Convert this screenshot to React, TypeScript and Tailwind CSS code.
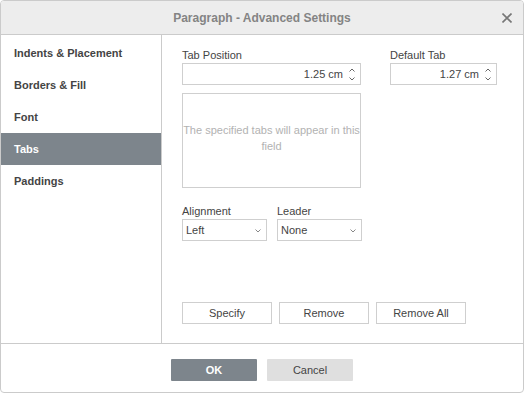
import React from "react";

const font = { fontFamily: '"Liberation Sans", Arial, sans-serif' };

function Spin() {
  return (
    <div className="absolute right-[5px] top-0 flex h-full flex-col items-center justify-center gap-[5px]">
      <svg width="6" height="4" viewBox="0 0 6 4">
        <path d="M0.5 3.5 L3 1 L5.5 3.5" fill="none" stroke="#666" strokeWidth="1" />
      </svg>
      <svg width="6" height="4" viewBox="0 0 6 4">
        <path d="M0.5 0.5 L3 3 L5.5 0.5" fill="none" stroke="#666" strokeWidth="1" />
      </svg>
    </div>
  );
}

function SpinInput({ value, w }: { value: string; w: string }) {
  return (
    <div className={`relative h-[22px] ${w} border border-[#cfcfcf] bg-white`}>
      <div className="flex h-full items-center justify-end pr-[17px] text-[11px] text-[#444]">{value}</div>
      <Spin />
    </div>
  );
}

function Select({ value }: { value: string }) {
  return (
    <div className="relative flex h-[22px] w-[85px] items-center border border-[#cfcfcf] bg-white pl-[3px] text-[11px] text-[#444]">
      {value}
      <svg className="absolute right-[5px] top-[9px]" width="6" height="4" viewBox="0 0 6 4">
        <path d="M0.5 0.5 L3 3 L5.5 0.5" fill="none" stroke="#888" strokeWidth="1" />
      </svg>
    </div>
  );
}

function Btn({ label, w }: { label: string; w: string }) {
  return (
    <div className={`flex h-[22px] ${w} items-center justify-center border border-[#cfcfcf] bg-white text-[11px] text-[#444]`}>
      {label}
    </div>
  );
}

export default function App() {
  const items = ["Indents & Placement", "Borders & Fill", "Font", "Tabs", "Paddings"];
  return (
    <div style={font} className="flex h-[393px] w-[524px] flex-col overflow-hidden rounded-[4px] border border-[#cbcbcb] bg-white">
      <div className="relative flex h-[34px] shrink-0 items-center justify-center border-b border-[#cbcbcb] bg-[#ededed]">
        <span className="text-[12px] font-bold text-[#848484]">Paragraph - Advanced Settings</span>
        <svg className="absolute right-[11px] top-[12px]" width="10" height="10" viewBox="0 0 10 10">
          <path d="M0.5 0.5 L9.5 9.5 M9.5 0.5 L0.5 9.5" stroke="#777" strokeWidth="1.6" />
        </svg>
      </div>
      <div className="flex flex-1">
        <div className="w-[161px] shrink-0 border-r border-[#cbcbcb] pt-[2px]">
          {items.map((it) => (
            <div
              key={it}
              className={`flex h-[32px] items-center pl-[13px] text-[11px] font-bold ${
                it === "Tabs" ? "bg-[#7d858c] text-white" : "text-[#444]"
              }`}
            >
              {it}
            </div>
          ))}
        </div>
        <div className="flex flex-1 flex-col pl-[20px] pt-[14px] text-[#444]">
          <div className="flex gap-[29px]">
            <div className="flex w-[179px] flex-col">
              <div className="mb-[1px] h-[13px] text-[11px] leading-[13px]">Tab Position</div>
              <SpinInput value="1.25 cm" w="w-[179px]" />
              <div className="mt-[8px] flex h-[95px] w-[179px] items-center justify-center border border-[#cfcfcf] pb-[5px] text-center text-[11px] leading-[16px] text-[#b2b2b2]">
                <span className="whitespace-nowrap">
                  The specified tabs will appear in this
                  <br />
                  field
                </span>
              </div>
            </div>
            <div className="flex w-[107px] flex-col">
              <div className="mb-[1px] h-[13px] text-[11px] leading-[13px]">Default Tab</div>
              <SpinInput value="1.27 cm" w="w-[107px]" />
            </div>
          </div>
          <div className="mt-[17px] flex gap-[10px]">
            <div className="flex flex-col">
              <div className="mb-[1px] h-[13px] text-[11px] leading-[13px]">Alignment</div>
              <Select value="Left" />
            </div>
            <div className="flex flex-col">
              <div className="mb-[1px] h-[13px] text-[11px] leading-[13px]">Leader</div>
              <Select value="None" />
            </div>
          </div>
          <div className="mt-[61px] flex gap-[7px]">
            <Btn label="Specify" w="w-[90px]" />
            <Btn label="Remove" w="w-[90px]" />
            <Btn label="Remove All" w="w-[90px]" />
          </div>
        </div>
      </div>
      <div className="flex h-[49px] shrink-0 items-start justify-center gap-[10px] border-t border-[#cbcbcb] pt-[15px]">
        <div className="flex h-[22px] w-[86px] items-center justify-center rounded-[1px] bg-[#7d858c] text-[11px] font-bold text-white">
          OK
        </div>
        <div className="flex h-[22px] w-[86px] items-center justify-center rounded-[1px] bg-[#dfdfdf] text-[11px] text-[#444]">
          Cancel
        </div>
      </div>
    </div>
  );
}
